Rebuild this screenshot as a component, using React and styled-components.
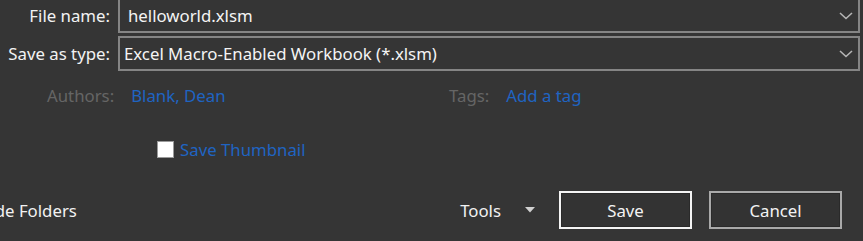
import React from "react";
import styled, { createGlobalStyle } from "styled-components";

const Global = createGlobalStyle`
  html, body {
    margin: 0;
    padding: 0;
    background: #353535;
  }
  * {
    box-sizing: border-box;
  }
`;

const Dialog = styled.div`
  width: 863px;
  height: 241px;
  overflow: hidden;
  background: #353535;
  font-family: "Noto Sans", "Open Sans", sans-serif;
  font-size: 16.8px;
  color: #f0f0f0;
  display: flex;
  flex-direction: column;
`;

const Fields = styled.div`
  display: grid;
  grid-template-columns: 110px 1fr;
  column-gap: 8px;
  row-gap: 3px;
  margin-top: -2px;
  padding-right: 3px;
  align-items: center;
`;

const Label = styled.label`
  text-align: right;
  white-space: nowrap;
  color: #f2f2f2;
`;

const Combo = styled.div`
  height: 35px;
  border: 2px solid #858585;
  background: #353535;
  display: flex;
  align-items: center;
  padding: 0 5px 0 ${(p) => p.$indent}px;
  color: #f4f4f4;

  span {
    flex: 1;
    white-space: nowrap;
  }
`;

const Chevron = () => (
  <svg width="14" height="8" viewBox="0 0 14 8">
    <path d="M1 1 L7 6.5 L13 1" fill="none" stroke="#b5b5b5" strokeWidth="1.6" />
  </svg>
);

const MetaRow = styled.div`
  display: flex;
  align-items: center;
  height: 26px;
  margin-top: 11px;
`;

const MetaItem = styled.div`
  display: flex;
  align-items: center;
  gap: 17px;
  width: ${(p) => p.$width}px;
  padding-left: ${(p) => p.$indent}px;
`;

const MutedLabel = styled.span`
  color: #656565;
`;

const Link = styled.span`
  color: #1f64c2;
  white-space: nowrap;
`;

const ThumbRow = styled.div`
  display: flex;
  align-items: center;
  gap: 6px;
  padding-left: 157px;
  margin-top: 30px;
`;

const Check = styled.span`
  width: 17px;
  height: 17px;
  background: #ffffff;
  border: 1px solid #9a9a9a;
`;

const Footer = styled.div`
  display: flex;
  align-items: center;
  margin-top: 30px;
  padding-right: 21px;
`;

const HideFolders = styled.span`
  margin-left: -22px;
  flex: 1;
  color: #f2f2f2;
`;

const Tools = styled.div`
  display: flex;
  align-items: center;
  gap: 24px;
  margin-right: 24px;
  color: #f2f2f2;
`;

const Button = styled.button`
  width: 133px;
  height: 38px;
  background: #333333;
  color: #f2f2f2;
  font: inherit;
  border: 2px solid ${(p) => (p.$primary ? "#f4f4f4" : "#a9a9a9")};
  box-shadow: inset 0 0 0 1px #2a2a2a;
  margin-left: ${(p) => p.$gap}px;
`;

export default function App() {
  return (
    <>
      <Global />
      <Dialog>
        <Fields>
          <Label>File name:</Label>
          <Combo $indent={8}>
            <span>helloworld.xlsm</span>
            <Chevron />
          </Combo>
          <Label>Save as type:</Label>
          <Combo $indent={4}>
            <span>Excel Macro-Enabled Workbook (*.xlsm)</span>
            <Chevron />
          </Combo>
        </Fields>
        <MetaRow>
          <MetaItem $width={449} $indent={47}>
            <MutedLabel>Authors:</MutedLabel>
            <Link>Blank, Dean</Link>
          </MetaItem>
          <MetaItem $indent={0}>
            <MutedLabel>Tags:</MutedLabel>
            <Link>Add a tag</Link>
          </MetaItem>
        </MetaRow>
        <ThumbRow>
          <Check />
          <Link>Save Thumbnail</Link>
        </ThumbRow>
        <Footer>
          <HideFolders>Hide Folders</HideFolders>
          <Tools>
            <span>Tools</span>
            <svg width="10" height="6" viewBox="0 0 10 6">
              <path d="M0 0 H10 L5 5.5 Z" fill="#d0d0d0" />
            </svg>
          </Tools>
          <Button $primary>Save</Button>
          <Button $gap={17}>Cancel</Button>
        </Footer>
      </Dialog>
    </>
  );
}
